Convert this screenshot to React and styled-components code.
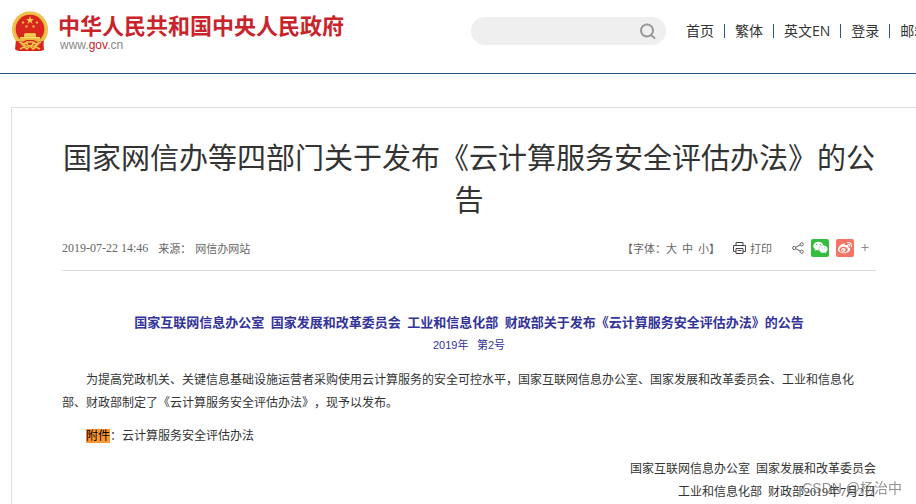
import React from "react";
import styled, { createGlobalStyle } from "styled-components";
import { FaWeibo, FaWeixin } from "react-icons/fa";

const sans = `"Liberation Sans", "Noto Sans CJK SC", sans-serif`;
const cjk = `"Noto Sans CJK SC", sans-serif`;
const song = `"Liberation Serif", "Noto Sans CJK SC", serif`;

const GlobalStyle = createGlobalStyle`
  * {
    box-sizing: border-box;
  }

  body {
    margin: 0;
    overflow: hidden;
    background-color: #fff;
    color: #333;
    font-family: ${sans};
    text-spacing-trim: space-all;
  }

  h1, h2, p {
    margin: 0;
    font-weight: normal;
  }

  button {
    padding: 0;
    border: 0;
    background: none;
    color: inherit;
    font: inherit;
    cursor: pointer;
  }
`;

const Header = styled.header`
  display: flex;
  align-items: center;
  height: 74px;
  padding: 0 0 11px 11px;
  border-bottom: 1px solid #2b5587;
  white-space: nowrap;
`;

const Logo = styled.a`
  display: flex;
  flex: none;
  align-items: center;
  gap: 9px;
  color: #c8242b;
  text-decoration: none;
`;

const LogoName = styled.span`
  display: block;
  font-family: ${cjk};
  font-size: 22px;
  font-weight: 700;
  line-height: 28px;
`;

const LogoUrl = styled.span`
  display: block;
  padding-left: 2px;
  color: #888;
  font-size: 12px;
  line-height: 14px;

  b {
    color: #c8242b;
    font-weight: normal;
  }
`;

const Search = styled.form`
  display: flex;
  flex: none;
  align-items: center;
  width: 195px;
  height: 28px;
  margin-left: 127px;
  padding: 0 10px 0 14px;
  border-radius: 14px;
  background-color: #efefef;
`;

const SearchInput = styled.input`
  flex: 1;
  min-width: 0;
  border: 0;
  outline: 0;
  background: transparent;
  font-size: 14px;
`;

const SearchButton = styled.button`
  display: flex;
`;

const Nav = styled.nav`
  display: flex;
  flex: none;
  margin-left: 10px;
`;

const NavLink = styled.a`
  padding: 0 10px;
  color: #333;
  font-family: "Open Sans", ${cjk};
  font-size: 14px;
  line-height: 14px;
  text-decoration: none;

  & + & {
    border-left: 1px solid #2b5587;
  }
`;

const Article = styled.main`
  margin: 33px -11px 0 11px;
  padding: 27px 50px 20px;
  border: 1px solid #ddd;
`;

const Title = styled.h1`
  font-family: ${cjk};
  font-size: 29px;
  font-weight: 400;
  line-height: 42px;
  text-align: center;
`;

const Meta = styled.div`
  display: flex;
  align-items: center;
  height: 52px;
  padding-top: 6px;
  border-bottom: 1px solid #ddd;
  color: #666;
  font-family: ${cjk};
  font-size: 11px;
  line-height: 18px;
`;

const Time = styled.time`
  margin-right: 10px;
  font-family: ${song};
  font-size: 12px;
`;

const Source = styled.span`
  margin-left: 4px;
`;

const FontSizes = styled.div`
  display: flex;
  gap: 5px;
  margin-left: auto;
`;

const PrintButton = styled.button`
  display: flex;
  align-items: center;
  gap: 4px;
  margin-left: 13px;
`;

const Share = styled.div`
  display: flex;
  align-items: center;
  gap: 7px;
  margin: 0 7px 0 20px;
`;

const ShareButton = styled.button`
  display: flex;
  align-items: center;
  justify-content: center;
  width: ${p => (p.$color ? "18px" : "auto")};
  height: 18px;
  border-radius: 2px;
  background-color: ${p => p.$color || "transparent"};
  color: #fff;
`;

const Notice = styled.h2`
  margin-top: 41px;
  color: #333399;
  font-family: ${song};
  font-size: 13px;
  font-weight: bold;
  line-height: 22px;
  text-align: center;
`;

const Number = styled.p`
  margin-bottom: 13px;
  color: #333399;
  font-size: 11px;
  line-height: 22px;
  text-align: center;
`;

const Paragraph = styled.p`
  margin-top: 10px;
  font-family: ${song};
  font-size: 12px;
  line-height: 23px;
  text-indent: ${p => (p.$right ? "0" : "2em")};
  text-align: ${p => (p.$right ? "right" : "left")};
`;

const Mark = styled.mark`
  background-color: #ff9632;
  color: #000;
`;

const Watermark = styled.div`
  position: fixed;
  right: 14px;
  bottom: 6px;
  color: rgba(110, 110, 110, 0.75);
  font-size: 14px;
  line-height: 20px;
`;

const Emblem = () => (
  <svg width="38" height="41" viewBox="0 0 38 41" aria-hidden="true">
    <path d="M5 29L4 38Q5 40 11 40H27Q33 40 33 38L32 29Z" fill="#d8261f" />
    <circle cx="19" cy="18.500" r="18" fill="#eab53c" />
    <circle cx="19" cy="18.500" r="16.500" fill="none" stroke="#f4cf62" />
    <circle cx="19" cy="18" r="14.300" fill="#d8261f" />
    <path
      d="M19 5l1 3h3l-2.400 1.900.9 3L19 11.100l-2.500 1.800.9-3L15 8h3z"
      fill="#f6c94a"
    />
    <g fill="#f0b93f">
      <circle cx="12" cy="11.500" r="1.200" />
      <circle cx="15.500" cy="15.500" r="1.200" />
      <circle cx="22.500" cy="15.500" r="1.200" />
      <circle cx="26" cy="11.500" r="1.200" />
      <path d="M14 22h10l1 2v2h4v4H9v-4h4v-2z" />
    </g>
    <path d="M10 26.500h18M13 24h12" stroke="#fbe07a" />
    <path
      d="M5 30l8 1 2-2h8l2 2 8-1 -1 4-7-1-6 4-6-4-7 1z"
      fill="#d8261f"
    />
    <path
      d="M8 31l5 2 3-2h6l3 2 5-2M9 38l4-2 3 2 3-3 3 3 3-2 4 2M16 32a3 3 0 0 0 6 0"
      fill="none"
      stroke="#f4c64a"
      strokeWidth="1.600"
    />
  </svg>
);

const SearchIcon = () => (
  <svg width="17" height="17" viewBox="0 0 17 17" aria-hidden="true">
    <g fill="none" stroke="#999" strokeWidth="2">
      <circle cx="8" cy="7.500" r="6" />
      <path d="M12 12l3.500 3" strokeLinecap="round" />
    </g>
  </svg>
);

const PrintIcon = () => (
  <svg width="13" height="12" viewBox="0 0 13 12" aria-hidden="true">
    <g fill="none" stroke="#444">
      <path d="M3 3.500V.5h7v3M3 9.500H.5v-6h12v6H10" />
      <path d="M3 6.500h7v5H3zM4.500 8.500h4" />
    </g>
  </svg>
);

const ShareIcon = () => (
  <svg width="12" height="12" viewBox="0 0 12 12" aria-hidden="true">
    <g fill="none" stroke="#666">
      <circle cx="2.200" cy="6" r="1.600" />
      <circle cx="9.700" cy="2.300" r="1.600" />
      <circle cx="9.700" cy="9.700" r="1.600" />
      <path d="M3.700 5.200l4.500-2.100M3.700 6.800l4.500 2.100" />
    </g>
  </svg>
);

const PlusIcon = () => (
  <svg width="8" height="9" viewBox="0 0 8 9" aria-hidden="true">
    <path d="M.5 4.500h7M4 1v7" stroke="#888" fill="none" />
  </svg>
);

const links = ["首页", "繁体", "英文EN", "登录", "邮箱"];

const App = () => (
  <>
    <GlobalStyle />
    <Header>
      <Logo href="#">
        <Emblem />
        <span>
          <LogoName>中华人民共和国中央人民政府</LogoName>
          <LogoUrl>
            www.<b>gov</b>.cn
          </LogoUrl>
        </span>
      </Logo>
      <Search>
        <SearchInput type="text" aria-label="搜索" />
        <SearchButton type="button" aria-label="搜索">
          <SearchIcon />
        </SearchButton>
      </Search>
      <Nav>
        {links.map(link => (
          <NavLink key={link} href="#">
            {link}
          </NavLink>
        ))}
      </Nav>
    </Header>

    <Article>
      <Title>国家网信办等四部门关于发布《云计算服务安全评估办法》的公告</Title>
      <Meta>
        <Time>2019-07-22 14:46</Time>
        <span>来源：</span>
        <Source>网信办网站</Source>
        <FontSizes>
          <span>
            【字体：<button type="button">大</button>
          </span>
          <button type="button">中</button>
          <span>
            <button type="button">小</button>】
          </span>
        </FontSizes>
        <PrintButton type="button">
          <PrintIcon />
          打印
        </PrintButton>
        <Share>
          <ShareButton type="button" aria-label="分享">
            <ShareIcon />
          </ShareButton>
          <ShareButton type="button" aria-label="微信" $color="#35bd3d">
            <FaWeixin size={15} />
          </ShareButton>
          <ShareButton type="button" aria-label="微博" $color="#f77567">
            <FaWeibo size={14} />
          </ShareButton>
          <ShareButton type="button" aria-label="更多">
            <PlusIcon />
          </ShareButton>
        </Share>
      </Meta>

      <Notice>
        国家互联网信息办公室&ensp;国家发展和改革委员会&ensp;工业和信息化部&ensp;财政部关于发布《云计算服务安全评估办法》的公告
      </Notice>
      <Number>2019年&ensp;&nbsp;第2号</Number>
      <Paragraph>
        为提高党政机关、关键信息基础设施运营者采购使用云计算服务的安全可控水平，国家互联网信息办公室、国家发展和改革委员会、工业和信息化部、财政部制定了《云计算服务安全评估办法》，现予以发布。
      </Paragraph>
      <Paragraph>
        <Mark>附件</Mark>：云计算服务安全评估办法
      </Paragraph>
      <Paragraph $right>
        国家互联网信息办公室&ensp;国家发展和改革委员会
        <br />
        工业和信息化部&ensp;财政部2019年7月2日
      </Paragraph>
    </Article>
    <Watermark>CSDN @杨治中</Watermark>
  </>
);

export default App;
